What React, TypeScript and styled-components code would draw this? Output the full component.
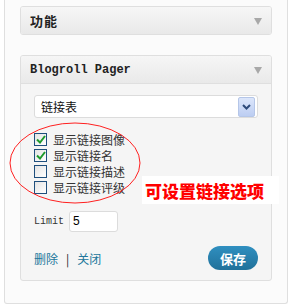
import React from "react";
import styled, { createGlobalStyle } from "styled-components";

const GlobalStyle = createGlobalStyle`
  body {
    margin: 0;
    background: #ffffff;
    font-family: "Noto Sans CJK SC", "Liberation Sans", sans-serif;
  }
`;

const Page = styled.div`
  position: relative;
  width: 292px;
  height: 308px;
  overflow: hidden;
`;

const Sidebar = styled.div`
  margin-left: 4px;
  width: 252px;
  height: 277px;
  padding: 6px 15px 20px;
  background: #fbfbfb;
  border: 1px solid #dfdfdf;
  border-top: none;
  border-radius: 0 0 3px 3px;
  display: flex;
  flex-direction: column;
  gap: 20px;
`;

const Widget = styled.div`
  border: 1px solid #dfdfdf;
  border-radius: 3px;
  background: #f5f5f5;
  overflow: hidden;
`;

const WidgetHeader = styled.div<{ $open?: boolean }>`
  height: 27px;
  display: flex;
  align-items: center;
  justify-content: space-between;
  padding: 0 9px 0 9px;
  background: linear-gradient(#f6f6f6, #e9e9e9);
  border-bottom: ${(p) => (p.$open ? "1px solid #dfdfdf" : "none")};
`;

const Title = styled.span<{ $mono?: boolean }>`
  font-family: ${(p) =>
    p.$mono
      ? `"Liberation Mono", "Noto Sans CJK SC", monospace`
      : `"Noto Sans CJK SC", sans-serif`};
  font-size: ${(p) => (p.$mono ? "12px" : "13px")};
  font-weight: bold;
  color: #222;
  letter-spacing: ${(p) => (p.$mono ? "0" : "1px")};
`;

const Arrow = styled.span`
  width: 0;
  height: 0;
  border-left: 4px solid transparent;
  border-right: 4px solid transparent;
  border-top: 7px solid #a8a8a8;
  margin-top: 2px;
`;

const WidgetBody = styled.div`
  padding: 11px 13px 10px;
  display: flex;
  flex-direction: column;
`;

const SelectBox = styled.div`
  height: 21px;
  border: 1px solid #dcdcdc;
  border-radius: 3px;
  background: #fff;
  display: flex;
  align-items: center;
  justify-content: space-between;
  padding: 0 2px 0 6px;
  font-size: 12px;
  color: #111;
`;

const SelectButton = styled.span`
  width: 15px;
  height: 18px;
  border: 1px solid #b5c6e8;
  border-radius: 2px;
  background: linear-gradient(#dce6fb, #bccdf2);
  display: flex;
  align-items: center;
  justify-content: center;
`;

const CheckList = styled.div`
  margin-top: 15px;
  display: flex;
  flex-direction: column;
  gap: 3px;
`;

const CheckRow = styled.label`
  display: flex;
  align-items: center;
  gap: 6px;
  height: 13px;
  font-size: 12px;
  color: #333;
`;

const Box = styled.span`
  width: 11px;
  height: 11px;
  border: 1px solid #1f4f7d;
  background: linear-gradient(135deg, #e4e4e4, #ffffff);
  display: flex;
  align-items: center;
  justify-content: center;
`;

const LimitRow = styled.div`
  margin-top: 17px;
  display: flex;
  align-items: center;
  gap: 5px;
`;

const LimitLabel = styled.span`
  font-family: "Liberation Mono", monospace;
  font-size: 10px;
  color: #333;
`;

const LimitInput = styled.div`
  width: 44px;
  height: 19px;
  border: 1px solid #dcdcdc;
  border-radius: 3px;
  background: #fff;
  padding-left: 3px;
  font-family: "Liberation Sans", sans-serif;
  font-size: 12px;
  line-height: 19px;
  color: #000;
`;

const ActionRow = styled.div`
  margin-top: 14px;
  display: flex;
  align-items: center;
  justify-content: space-between;
`;

const Links = styled.div`
  display: flex;
  align-items: center;
  gap: 8px;
  font-size: 12px;
  color: #222;
`;

const Link = styled.a`
  color: #21759b;
  text-decoration: none;
`;

const SaveButton = styled.button`
  width: 50px;
  height: 24px;
  border: none;
  border-radius: 12px;
  background: linear-gradient(#2f8fc0, #21719a);
  color: #fff;
  font-family: "Noto Sans CJK SC", sans-serif;
  font-size: 13px;
  font-weight: bold;
  padding: 0;
`;

const Ellipse = styled.svg`
  position: absolute;
  left: 9px;
  top: 122px;
`;

const Callout = styled.div`
  position: absolute;
  left: 142px;
  top: 176px;
  width: 137px;
  height: 28px;
  background: #fff;
  color: #ff0000;
  font-family: "Noto Sans CJK SC", sans-serif;
  font-size: 17px;
  font-weight: 900;
  display: flex;
  align-items: center;
  padding-left: 3px;
  box-sizing: border-box;
`;

const Check = () => (
  <svg width="10" height="9" viewBox="0 0 10 9">
    <path d="M1 4.5 L4 7.5 L9 1" fill="none" stroke="#1e9a2c" strokeWidth="2" />
  </svg>
);

const options = [
  { label: "显示链接图像", checked: true },
  { label: "显示链接名", checked: true },
  { label: "显示链接描述", checked: false },
  { label: "显示链接评级", checked: false },
];

export default function App() {
  return (
    <Page>
      <GlobalStyle />
      <Sidebar>
        <Widget>
          <WidgetHeader>
            <Title>功能</Title>
            <Arrow />
          </WidgetHeader>
        </Widget>
        <Widget>
          <WidgetHeader $open>
            <Title $mono>Blogroll Pager</Title>
            <Arrow />
          </WidgetHeader>
          <WidgetBody>
            <SelectBox>
              链接表
              <SelectButton>
                <svg width="9" height="6" viewBox="0 0 9 6">
                  <path d="M1 1 L4.5 4.5 L8 1" fill="none" stroke="#2d4a7a" strokeWidth="2" />
                </svg>
              </SelectButton>
            </SelectBox>
            <CheckList>
              {options.map((o) => (
                <CheckRow key={o.label}>
                  <Box>{o.checked && <Check />}</Box>
                  {o.label}
                </CheckRow>
              ))}
            </CheckList>
            <LimitRow>
              <LimitLabel>Limit</LimitLabel>
              <LimitInput>5</LimitInput>
            </LimitRow>
            <ActionRow>
              <Links>
                <Link href="#">删除</Link>|<Link href="#">关闭</Link>
              </Links>
              <SaveButton>保存</SaveButton>
            </ActionRow>
          </WidgetBody>
        </Widget>
      </Sidebar>
      <Ellipse width="134" height="84" viewBox="0 0 134 84">
        <ellipse cx="66" cy="41" rx="65" ry="40" fill="none" stroke="#ff2020" strokeWidth="1" />
      </Ellipse>
      <Callout>可设置链接选项</Callout>
    </Page>
  );
}
